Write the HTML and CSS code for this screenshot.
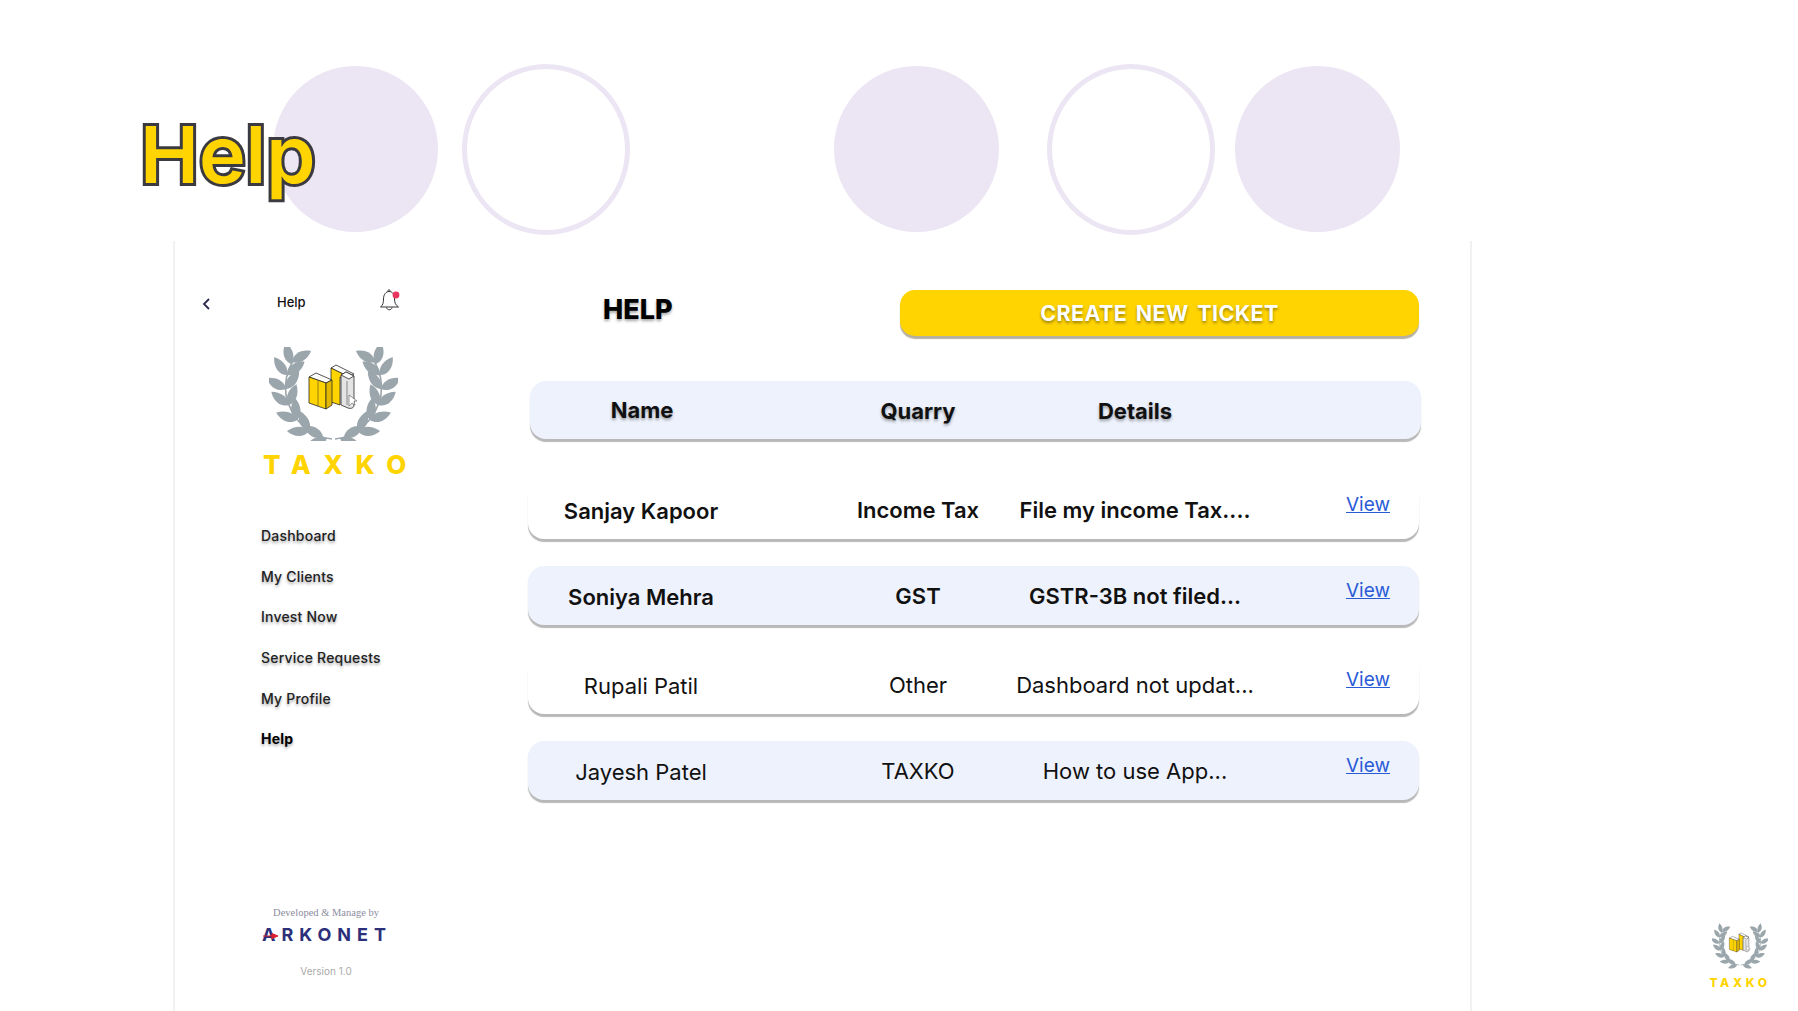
FILE: index.html
```html
<!DOCTYPE html>
<html lang="en">
<head>
    <meta charset="UTF-8">
    <title>Help</title>
    <link rel="stylesheet" href="styles.css">
</head>
<body>
    <svg class="defs" width="0" height="0">
        <defs>
            <path id="leaf" d="M0 0C4-7 14-8 22-2C14 5 5 5 0 0Z"/>
            <g id="branch" fill="#9ba6ac">
                <path d="M63 92C40 90 22 72 17 48C15 34 18 24 24 14" fill="none" stroke="#9ba6ac" stroke-width="1.6"/>
                <use href="#leaf" transform="translate(58 91) rotate(165)"/>
                <use href="#leaf" transform="translate(54 90) rotate(215)"/>
                <use href="#leaf" transform="translate(40 84) rotate(185)"/>
                <use href="#leaf" transform="translate(40 84) rotate(250)"/>
                <use href="#leaf" transform="translate(28 73) rotate(205)"/>
                <use href="#leaf" transform="translate(28 73) rotate(270)"/>
                <use href="#leaf" transform="translate(20 58) rotate(222)"/>
                <use href="#leaf" transform="translate(20 58) rotate(295)"/>
                <use href="#leaf" transform="translate(17 42) rotate(215)"/>
                <use href="#leaf" transform="translate(17 42) rotate(312)"/>
                <use href="#leaf" transform="translate(18 28) rotate(240)"/>
                <use href="#leaf" transform="translate(18 28) rotate(328)"/>
                <use href="#leaf" transform="translate(22 17) rotate(262)"/>
                <use href="#leaf" transform="translate(23 15) rotate(335)"/>
            </g>
            <symbol id="wreath" viewBox="0 0 129 94">
                <use href="#branch"/>
                <use href="#branch" transform="translate(129 0) scale(-1 1)"/>
                <g stroke="#2a2a2a" stroke-width=".8" stroke-linejoin="round">
                    <path d="M62 21L67 18L85 27L80 30Z" fill="#fff"/>
                    <path d="M62 21L80 30L80 33L71 30V58L62 55Z" fill="#ffd400"/>
                    <path d="M72 28L77 25L85 29V58C85 61 82 62 79 61L72 58Z" fill="#e4e4e4"/>
                    <path d="M72 28L77 25L85 29L80 32Z" fill="#fff"/>
                    <path d="M40 30L47 26L63 33L57 36Z" fill="#fff"/>
                    <path d="M40 30L57 36V62L40 56Z" fill="#ffd400"/>
                    <path d="M57 36L63 33V58L57 62Z" fill="#e3b900"/>
                    <path d="M49 34V59M78 34V58" fill="none" stroke-width=".5"/>
                </g>
                <path d="M80 48L80 59L83 56L86 58L85 54L88 54Z" fill="#fff" stroke="#555" stroke-width=".6"/>
            </symbol>
        </defs>
    </svg>

    <div class="slide">
        <h1 class="slide-title">Help</h1>

        <div class="circles">
            <span class="circle"></span>
            <span class="circle ring"></span>
            <span class="circle far"></span>
            <span class="circle ring near"></span>
            <span class="circle"></span>
        </div>

        <div class="phone">
            <aside class="sidebar">
                <div class="topbar">
                    <svg class="back" width="10" height="14" viewBox="0 0 10 14">
                        <path d="M8 2L3 7L8 12" fill="none" stroke="#2b2b4d" stroke-width="1.8"/>
                    </svg>
                    <span class="topbar-title">Help</span>
                    <svg class="bell" width="24" height="24" viewBox="0 0 24 24">
                        <path d="M2.5 19C5 17 5.5 14.5 5.5 11C5.5 6.5 8 3.5 11 3.5C14.5 3.5 16.5 6.5 16.5 11C16.5 14.5 17.5 17 20.5 19Z" fill="none" stroke="#333" stroke-width="1"/>
                        <path d="M8.5 19.5C9 22.5 13.5 22.5 14 19.5M10 3.5C10 1 12 1 12 3.5" fill="none" stroke="#333" stroke-width="1"/>
                        <circle cx="18" cy="7" r="3.4" fill="#e8345f"/>
                    </svg>
                </div>

                <div class="brand">
                    <svg class="wreath" width="129" height="94"><use href="#wreath"/></svg>
                    <div class="brand-name">TAXKO</div>
                </div>

                <nav class="menu">
                    <a>Dashboard</a>
                    <a>My Clients</a>
                    <a>Invest Now</a>
                    <a>Service Requests</a>
                    <a>My Profile</a>
                    <a class="active">Help</a>
                </nav>

                <footer class="credits">
                    <p class="dev">Developed &amp; Manage by</p>
                    <div class="arkonet">
                        ARKONET
                        <svg class="arrow" width="16" height="6" viewBox="0 0 16 6">
                            <path d="M0 3H11M9 .5L15 3L9 5.5Z" fill="#d9232e" stroke="#d9232e"/>
                        </svg>
                    </div>
                    <p class="version">Version 1.0</p>
                </footer>
            </aside>

            <main class="content">
                <div class="content-head">
                    <h2>HELP</h2>
                    <button class="new-ticket">CREATE NEW TICKET</button>
                </div>

                <div class="table-head">
                    <span class="name">Name</span>
                    <span class="quarry">Quarry</span>
                    <span>Details</span>
                </div>

                <div class="rows">
                    <div class="row bold">
                        <span class="name">Sanjay Kapoor</span>
                        <span>Income Tax</span>
                        <span>File my income Tax....</span>
                        <a class="view">View</a>
                    </div>
                    <div class="row bold tint">
                        <span class="name">Soniya Mehra</span>
                        <span>GST</span>
                        <span>GSTR-3B not filed...</span>
                        <a class="view">View</a>
                    </div>
                    <div class="row lower">
                        <span class="name">Rupali Patil</span>
                        <span>Other</span>
                        <span>Dashboard not updat...</span>
                        <a class="view">View</a>
                    </div>
                    <div class="row tint">
                        <span class="name">Jayesh Patel</span>
                        <span>TAXKO</span>
                        <span>How to use App...</span>
                        <a class="view">View</a>
                    </div>
                </div>
            </main>
        </div>

        <div class="corner-logo">
            <svg width="56" height="51"><use href="#wreath"/></svg>
            <div class="corner-name">TAXKO</div>
        </div>
    </div>
</body>
</html>
```

FILE: styles.css
```css
* {
    box-sizing: border-box;
}

body {
    margin: 0;
    background: #fff;
    font-family: 'Inter', 'Liberation Sans', sans-serif;
    color: #111;
    overflow: hidden;
}

.defs {
    display: block;
    height: 0;
}

.slide {
    position: relative;
    width: 1798px;
    height: 1011px;
    overflow: hidden;
}

.slide-title {
    position: absolute;
    left: 140px;
    top: 104px;
    margin: 0;
    z-index: 2;
    font-size: 79px;
    line-height: 100px;
    font-weight: 600;
    letter-spacing: 0;
    color: #ffd400;
    -webkit-text-stroke: 6px #3a3a40;
    paint-order: stroke fill;
}

.circles {
    display: flex;
    align-items: center;
    height: 241px;
    padding: 57px 0 0 273px;
    gap: 24px;
}

.circle {
    width: 165px;
    height: 166px;
    border-radius: 50%;
    background: #ece5f3;
}

.circle.ring {
    width: 168px;
    height: 171px;
    background: #fff;
    border: 5px solid #ece5f3;
}

.circle.far {
    margin-left: 180px;
}

.circle.near {
    margin-left: 24px;
    margin-right: -4px;
}

.phone {
    display: flex;
    width: 1299px;
    height: 770px;
    margin-left: 173px;
    border-left: 2px solid #f1f1f1;
    border-right: 2px solid #f1f1f1;
}

/* sidebar */
.sidebar {
    display: flex;
    flex-direction: column;
    width: 353px;
}

.topbar {
    display: flex;
    align-items: center;
    height: 24px;
    margin-top: 49px;
    padding-left: 26px;
}

.back {
    margin-top: 4px;
}

.topbar-title {
    margin-left: 66px;
    font-size: 13px;
    font-weight: 500;
}

.bell {
    margin-left: 72px;
    margin-top: -4px;
}

.brand {
    width: 160px;
    margin: 33px 0 0 88px;
    text-align: center;
}

.wreath {
    display: block;
    margin-left: 6px;
}

.brand-name {
    margin-top: 10px;
    font-size: 26px;
    line-height: 27px;
    font-weight: 800;
    letter-spacing: 12.5px;
    white-space: nowrap;
    color: #ffd400;
    text-align: left;
}

.menu {
    display: flex;
    flex-direction: column;
    margin-top: 38px;
    padding-left: 86px;
}

.menu a {
    height: 40.7px;
    line-height: 40px;
    font-size: 14px;
    font-weight: 500;
    letter-spacing: .2px;
    color: #222;
    text-shadow: 0 2px 3px rgba(0, 0, 0, .35);
}

.menu a.active {
    font-weight: 700;
    color: #000;
}

.credits {
    width: 160px;
    margin: auto 0 34px 71px;
    text-align: center;
}

.credits p {
    margin: 0;
}

.dev {
    font-family: 'Liberation Serif', serif;
    font-size: 10.5px;
    color: #8c8ca0;
}

.arkonet {
    position: relative;
    margin-top: 7px;
    padding-left: 2px;
    font-size: 18px;
    line-height: 20px;
    font-weight: 700;
    letter-spacing: 6px;
    white-space: nowrap;
    color: #2c2f7a;
}

.arrow {
    position: absolute;
    left: 17px;
    top: 8px;
}

.version {
    margin-top: 20px !important;
    font-size: 10px;
    color: #aaa;
}

/* main area */
.content {
    flex: 1;
    padding: 49px 51px 0 0;
}

.content-head {
    display: flex;
    justify-content: space-between;
    height: 47px;
}

.content-head h2 {
    margin: 3px 0 0 75px;
    font-size: 27px;
    line-height: 34px;
    font-weight: 800;
    color: #000;
    text-shadow: 0 2px 3px rgba(0, 0, 0, .35);
}

.new-ticket {
    width: 519px;
    height: 46px;
    border: none;
    border-radius: 15px;
    background: #ffd400;
    box-shadow: 0 3px 1px #b5b0a0;
    color: #fff;
    font-family: inherit;
    font-size: 21.5px;
    font-weight: 700;
    letter-spacing: .4px;
    word-spacing: 3px;
    text-shadow: 0 2px 3px rgba(0, 0, 0, .4);
}

.table-head,
.row {
    display: grid;
    grid-template-columns: 293px 194px 240px 1fr;
    align-items: center;
    text-align: center;
}

.table-head {
    height: 58px;
    margin: 44px -2px 0 2px;
    border-radius: 16px;
    background: #eef2fc;
    box-shadow: 0 3px 1px #b8b8b8;
    font-size: 22px;
    font-weight: 700;
    text-shadow: 0 2px 3px rgba(0, 0, 0, .35);
}

.table-head span {
    margin: 2px 2px 0 -2px;
}

.table-head .name {
    margin: 0 0 1px -2px;
}

.name {
    padding-right: 67px;
}

.rows {
    display: flex;
    flex-direction: column;
    gap: 27px;
    margin-top: 41px;
}

.row {
    height: 59px;
    border-radius: 16px;
    background: #fff;
    box-shadow: 0 3px 1px #b8b8b8;
    font-size: 22px;
}

.row.tint {
    background: #eef2fc;
}

.row.bold {
    font-weight: 600;
}

.row.lower {
    margin-top: 3px;
}

.row .name {
    margin-top: 3px;
}

.view {
    justify-self: end;
    margin: 0 29px 10px 0;
    font-size: 19px;
    font-weight: 400;
    color: #2a5bd7;
    text-decoration: underline;
}

.corner-logo {
    position: absolute;
    left: 1708px;
    top: 920px;
    width: 64px;
    text-align: center;
}

.corner-logo svg {
    display: block;
    margin: 0 auto;
}

.corner-name {
    margin-top: 5px;
    font-size: 12px;
    line-height: 13px;
    font-weight: 800;
    letter-spacing: 3.6px;
    white-space: nowrap;
    color: #ffd400;
}
```
